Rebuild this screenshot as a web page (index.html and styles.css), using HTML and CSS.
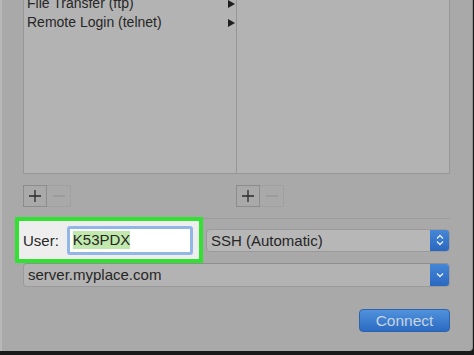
FILE: index.html
```html
<!DOCTYPE html>
<html lang="en">
<head>
  <meta charset="UTF-8" />
  <title>Connect to Server</title>
  <link rel="stylesheet" href="styles.css">
</head>
<body>

  <div class="window">
    <!-- service / server lists -->
    <div class="lists">
      <div class="panel">
        <ul class="services">
          <li>File Transfer (ftp) <span class="arrow"></span></li>
          <li>Remote Login (telnet) <span class="arrow"></span></li>
        </ul>
      </div>
      <div class="panel"></div>
    </div>

    <div class="list-tools">
      <div class="tool-pair">
        <button class="tool">
          <svg width="14" height="14" viewBox="0 0 14 14"><path d="M7 1v12M1 7h12" stroke="#2a2a2a" stroke-width="1.3"/></svg>
        </button>
        <button class="tool off">
          <svg width="14" height="14" viewBox="0 0 14 14"><path d="M1 7h12" stroke="#939393" stroke-width="1.3"/></svg>
        </button>
      </div>
      <div class="tool-pair">
        <button class="tool">
          <svg width="14" height="14" viewBox="0 0 14 14"><path d="M7 1v12M1 7h12" stroke="#2a2a2a" stroke-width="1.3"/></svg>
        </button>
        <button class="tool off">
          <svg width="14" height="14" viewBox="0 0 14 14"><path d="M1 7h12" stroke="#939393" stroke-width="1.3"/></svg>
        </button>
      </div>
    </div>

    <!-- user + protocol -->
    <div class="form-row">
      <div class="user-box">
        <label for="user">User:</label>
        <div class="user-field"><span class="selected">K53PDX</span></div>
      </div>
      <div class="proto-col">
        <div class="popup">
          <span class="popup-text">SSH (Automatic)</span>
          <span class="popup-btn">
            <svg width="10" height="14" viewBox="0 0 10 14"><path d="M2 5.5l3-3 3 3M2 8.5l3 3 3-3" fill="none" stroke="#e8eef8" stroke-width="1.3"/></svg>
          </span>
        </div>
      </div>
    </div>

    <div class="combo">
      <span class="combo-text">server.myplace.com</span>
      <span class="popup-btn">
        <svg width="10" height="8" viewBox="0 0 10 8"><path d="M2 2.5l3 3 3-3" fill="none" stroke="#e8eef8" stroke-width="1.4"/></svg>
      </span>
    </div>

    <div class="actions">
      <button class="connect-btn">Connect</button>
    </div>
  </div>

</body>
</html>
```

FILE: styles.css
```css
body {
  margin: 0;
  background-color: #1a1a1a;
  font-family: 'Liberation Sans', Arial, sans-serif;
  color: #262626;
}

.window {
  width: 473px;
  height: 351px;
  box-sizing: border-box;
  padding: 0 22px 0 21px;
  background-color: #a9a9a9;
  border-left: 2px solid #b9b9b9;
  border-right: 1px solid #8f8f8f;
  border-bottom-right-radius: 4px;
  display: flex;
  flex-direction: column;
}

.lists {
  display: flex;
  width: 427px;
  height: 174px;
}

.panel {
  flex: 1;
  background-color: #b3b3b3;
  border: 1px solid #979797;
  border-top: none;
  overflow: hidden;
}

.panel + .panel {
  border-left: none;
}

.services {
  list-style: none;
  margin: -6px 0 0;
  padding: 0 0 0 3px;
  font-size: 14px;
  line-height: 19px;
}

.services li {
  display: flex;
  justify-content: space-between;
  align-items: center;
  padding-right: 1px;
}

.arrow {
  width: 0;
  height: 0;
  border-left: 7px solid #1e1e1e;
  border-top: 4px solid transparent;
  border-bottom: 4px solid transparent;
}

.list-tools {
  display: flex;
  margin-top: 11px;
  height: 22px;
}

.tool-pair {
  display: flex;
  width: 213px;
}

.tool {
  width: 24px;
  height: 22px;
  padding: 0;
  background-color: #a9a9a9;
  border: 1px solid #8c8c8c;
  display: flex;
  align-items: center;
  justify-content: center;
}

.tool.off {
  border-color: #a0a0a0;
  border-left: none;
}

.form-row {
  display: flex;
  margin: 10px 0 0 -8px;
  height: 46px;
}

.user-box {
  width: 188px;
  box-sizing: border-box;
  border: 4px solid #33e133;
  background-color: #eeeeee;
  display: flex;
  align-items: center;
  padding-left: 4px;
  gap: 8px;
  font-size: 15px;
}

.user-field {
  width: 126px;
  height: 29px;
  box-sizing: border-box;
  background-color: #ffffff;
  border: 3px solid #92b6e6;
  border-radius: 3px;
  display: flex;
  align-items: center;
  padding-left: 3px;
}

.selected {
  background-color: #c2e9ad;
  line-height: 18px;
}

.proto-col {
  flex: 1;
  margin-top: 1px;
  border-top: 1px solid #9c9c9c;
  display: flex;
  align-items: center;
  padding-left: 3px;
}

.popup,
.combo {
  display: flex;
  align-items: stretch;
  height: 21px;
  background-color: #b7b7b7;
  border: 1px solid #9a9a9a;
  border-radius: 4px;
  font-size: 15px;
  overflow: hidden;
}

.popup {
  flex: 1;
  margin-top: -2px;
}

.popup-text,
.combo-text {
  flex: 1;
  padding-left: 4px;
  line-height: 21px;
}

.popup-btn {
  width: 19px;
  background: linear-gradient(#4586d6, #2a68c0);
  display: flex;
  align-items: center;
  justify-content: center;
}

.combo {
  height: 22px;
  border-top-color: #8f8f8f;
  background-color: #b3b3b3;
}

.combo-text {
  line-height: 22px;
}

.actions {
  display: flex;
  justify-content: flex-end;
  margin-top: 22px;
}

.connect-btn {
  width: 91px;
  height: 23px;
  padding: 0;
  background: linear-gradient(#5092dc, #2b6bc2);
  border: 1px solid #2d62ad;
  border-radius: 4px;
  color: #c7d3e2;
  font-family: 'Liberation Sans', Arial, sans-serif;
  font-size: 15.5px;
}
```
